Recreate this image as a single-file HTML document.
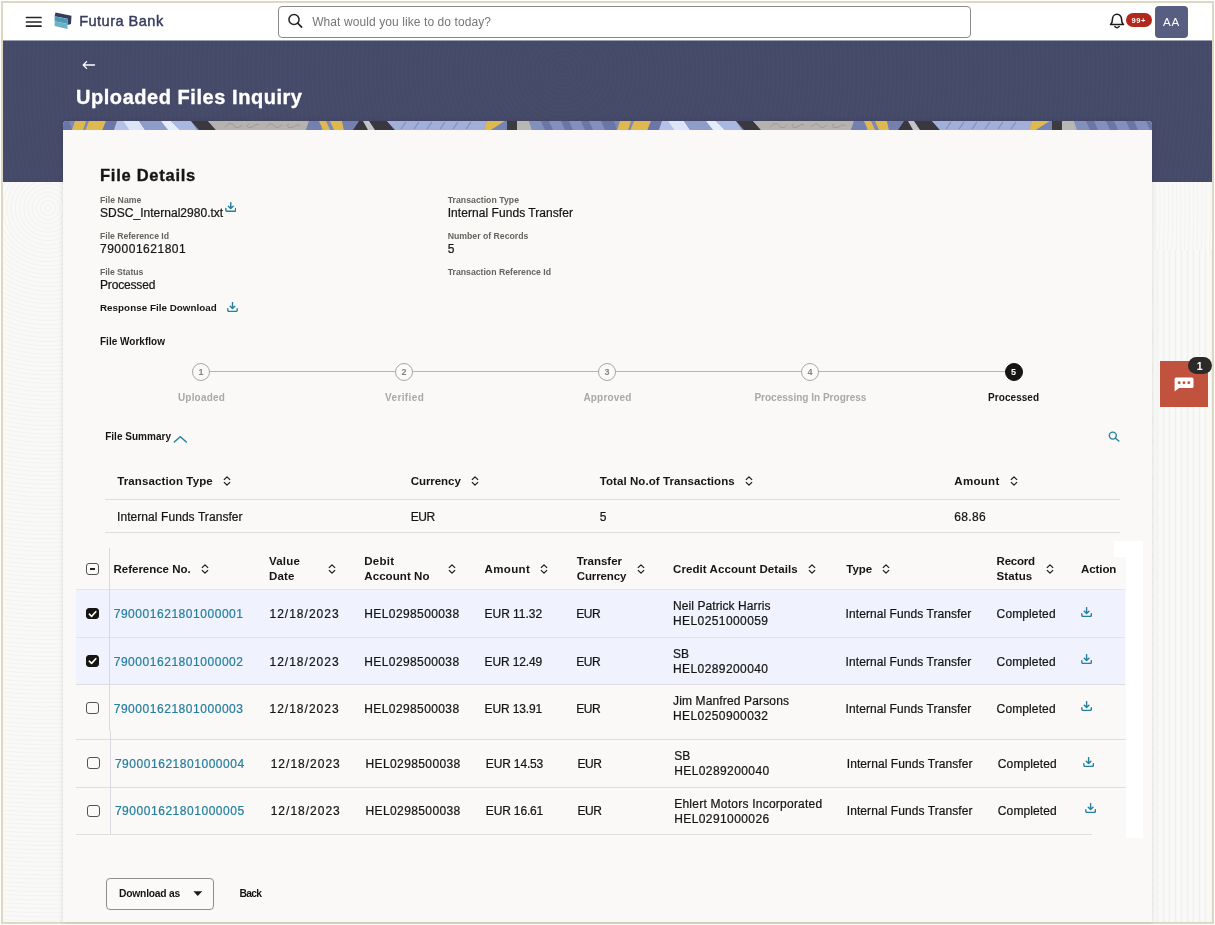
<!DOCTYPE html>
<html lang="en"><head><meta charset="utf-8"><title>Uploaded Files Inquiry</title>
<style>
*{box-sizing:border-box;margin:0;padding:0}
html,body{width:1215px;height:925px;overflow:hidden;background:#fff}
body{font-family:"Liberation Sans",sans-serif;color:#161513;position:relative;will-change:transform}
.abs,.t,svg.i{position:absolute}
.t{white-space:nowrap;line-height:1;display:block}
#frame{left:1px;top:1px;width:1213px;height:923px;border:2px solid #ddd8c1;background:#f8f7f5 repeating-radial-gradient(circle at 45px 205px,#f9f9f7 0,#f9f9f7 2.2px,#f3f2f0 3.2px,#f9f9f7 4.2px)}
#hdr{left:3px;top:3px;width:1209px;height:37px;background:#fff}
#band{left:3px;top:40px;width:1209px;height:142px;background:#464a69 repeating-radial-gradient(circle at 560px 30px,#464a69 0,#464a69 2.5px,#494d6c 3.5px,#464a69 4.5px);border-top:1px solid #9b9db1}
#card{left:63px;top:121px;width:1089px;height:801px;background:#faf9f7;border-radius:4px 4px 0 0;box-shadow:0 0 5px rgba(0,0,0,.13);overflow:hidden}
#strip{left:0;top:0;width:1089px;height:9px}
#search{left:278px;top:6px;width:693px;height:32px;border:1px solid #8b8a88;border-radius:4px;background:#fff}
#avatar{left:1155px;top:6px;width:33px;height:32px;border-radius:4px;background:#575e81}
#nbadge{left:1126px;top:13.2px;width:25.5px;height:14px;border-radius:7px;background:#b2281b}
.hl{height:1px;background:#e0dedb}
.vl{width:1px;background:#d8d9de}
.sel{background:#f0f3fd}
.cb{width:12.8px;height:12.2px;border:1.6px solid #55534f;border-radius:3px;background:#fbfaf9}
.cb.on{background:#161513;border-color:#161513;width:12.5px;height:11.7px}
.step{width:18px;height:18px;border-radius:50%;border:1.5px solid #a9a8a5;background:#fbfaf9}
.step.on{background:#161513;border-color:#161513}
#btn{left:106px;top:877.5px;width:108px;height:32px;border:1px solid #8f8e8b;border-radius:4px;background:#fbfaf9}
#chat{left:1160px;top:361px;width:48px;height:46px;background:#c1523e}
#cbadge{left:1187.8px;top:357px;width:24.4px;height:17px;border-radius:9px;background:#2b2a28}
.white{background:#fff}
.fb{-webkit-text-stroke:.45px #363d5c}
.r{-webkit-text-stroke:.22px currentColor}
.hv{-webkit-text-stroke:.35px currentColor}
#rpanel{left:1153px;top:250px;width:59px;height:672px;background:repeating-linear-gradient(90deg,#f9f9f7 0,#f9f9f7 3px,#f2f1ef 4.5px,#f9f9f7 6px)}

</style></head>
<body>
<svg width="0" height="0" style="position:absolute">
<defs>
<symbol id="dl" viewBox="0 0 12 11"><path d="M6 .7V7M3.5 4.6 6 7.1 8.500 4.600M.9 7.200V9Q.9 10.200 2.100 10.200H9.900Q11.100 10.200 11.100 9V7.200" fill="none" stroke="#267f9f" stroke-width="1.5" stroke-linecap="round" stroke-linejoin="round"/></symbol>
<symbol id="sort" viewBox="0 0 8 10"><path d="M.9 3.900 4 .9 7.100 3.900M.9 6.100 4 9.100 7.100 6.100" fill="none" stroke="#1f1e1c" stroke-width="1.300" stroke-linecap="butt" stroke-linejoin="round"/></symbol>
</defs>
</svg>
<div class="abs" id="frame"></div>
<div class="abs" id="hdr"></div>
<div class="abs" id="band"></div>
<div class="abs" id="rpanel"></div>
<!-- header icons -->
<svg class="i" style="left:25px;top:15px" width="18" height="14" viewBox="0 0 18 14"><path d="M1.500 2.500H16M1.500 7H16M1.500 11.200H16" stroke="#262523" stroke-width="1.700" stroke-linecap="round"/></svg>
<svg class="i" style="left:54px;top:11.500px" width="19" height="18" viewBox="0 0 19 18"><path d="M1.500.6 17.500 3.800 17 12 13.500 13 13.500 6.800 0.600 4.200Z" fill="#353c5e"/><path d="M.6 4.300 13.500 7 13.500 12 .6 9.200Z" fill="#4a9ab6"/><path d="M.6 9.200 13.500 12 13.500 17 .6 14Z" fill="#6eb1c6"/></svg>
<div class="abs" id="search"></div>
<svg class="i" style="left:287px;top:13px" width="17" height="16" viewBox="0 0 17 16"><circle cx="7" cy="6.500" r="5.050" fill="none" stroke="#262523" stroke-width="1.500"/><path d="M10.700 10.200 14.600 14.100" stroke="#262523" stroke-width="1.700" stroke-linecap="round"/></svg>
<svg class="i" style="left:1109px;top:13px" width="16" height="17" viewBox="0 0 16 17"><path d="M1.500 11.500H14.500C13 10.300 12.600 9 12.600 6.400 12.600 3.400 10.600 1.300 8 1.300 5.400 1.300 3.400 3.400 3.400 6.400 3.400 9 3 10.300 1.500 11.500Z" fill="none" stroke="#1d1c1a" stroke-width="1.550" stroke-linejoin="round"/><path d="M5.800 13.600Q8 15.800 10.200 13.600" fill="none" stroke="#1d1c1a" stroke-width="1.400" stroke-linecap="round"/></svg>
<div class="abs" id="nbadge"></div>
<div class="abs" id="avatar"></div>
<!-- back arrow -->
<svg class="i" style="left:82px;top:60px" width="14" height="10" viewBox="0 0 14 10"><path d="M1.200 5H12.500M4.600 1.600 1.200 5 4.600 8.400" fill="none" stroke="#fff" stroke-width="1.300" stroke-linecap="round" stroke-linejoin="round"/></svg>
<!-- card -->
<div class="abs" id="card">
<svg class="abs" id="strip" viewBox="0 0 1089 10" preserveAspectRatio="none">
<defs>
<pattern id="pat" x="0" y="0" width="545" height="10" patternUnits="userSpaceOnUse">
<rect width="545" height="10" fill="#7d8ab7"/>
<path d="M12 0H23L20 10H9Z" fill="#dfb94f"/>
<path d="M26 0H43L39.500 10H22.500Z" fill="#dfb94f"/>
<path d="M43 0H54L51 10H39.500Z" fill="#6b78a7"/>
<path d="M54 0H60L66 10H51Z" fill="#b3c2e6"/>
<path d="M60 0H76L82 10H66Z" fill="#dce5f7"/>
<path d="M76 0H98L105 10H82Z" fill="#8e9cc9"/>
<path d="M98 0H108L117 10H105Z" fill="#e4ebf9"/>
<path d="M108 0H128L134 10H117Z" fill="#a9b8df"/>
<path d="M128 0H145L153 10H136Z" fill="#39393f"/>
<path d="M145 0H246L243 10H153Z" fill="#b6b3af"/>
<path d="M162 7C165 2 170 2 171 5S176 9 179 4M186 3C183 5 184 8 188 7S192 3 196 4M203 7C206 3 209 2 211 5S215 8 219 4M226 3C223 5 225 8 229 7S233 3 237 5" fill="none" stroke="#959390" stroke-width=".9"/>
<path d="M246 0H258L258 10H243Z" fill="#7380b0"/>
<path d="M256 0H263L267 10H260Z" fill="#dfb94f"/>
<path d="M267 0H279L281 10H271Z" fill="#dfb94f"/>
<path d="M279 0H296L290 10H281Z" fill="#7380b0"/>
<path d="M296 0H324L332 10H290Z" fill="#38383e"/>
<path d="M300 0H306L312 10H305Z" fill="#c4c5c9"/>
<path d="M324 0H424L421 10H332Z" fill="#a1afd9"/>
<path d="M343 1 338 9M356 1 351 9M369 1 364 9M382 1 377 9M395 1 390 9M408 1 403 9" stroke="#8492c2" stroke-width="1.200"/>
<path d="M424 0H442L428 10H421Z" fill="#dfb94f"/>
<path d="M442 0H444V10H428Z" fill="#7683b3"/>
<path d="M444 0H454V10H444Z" fill="#3b3b41"/>
<path d="M454 0H466L469 10H454Z" fill="#b9b7b3"/>
<path d="M466 0H545V10H469Z" fill="#8390bd"/>
<path d="M478 0H486L490 10H482ZM498 0H506L510 10H502ZM518 0H526L530 10H522ZM538 0H545V10H542Z" fill="#6a77a6"/>
<path d="M0 0H6L9 10H0Z" fill="#6a77a6"/>
</pattern>
</defs>
<rect width="1089" height="10" fill="url(#pat)"/>
</svg>
</div>
<!-- file details icons -->
<svg class="i" style="left:224.500px;top:201.800px" width="11.500" height="10" viewBox="0 0 12 11" preserveAspectRatio="none"><use href="#dl"/></svg>
<svg class="i" style="left:226.500px;top:302px" width="11" height="10.200" viewBox="0 0 12 11" preserveAspectRatio="none"><use href="#dl"/></svg>
<!-- workflow -->
<div class="abs" style="left:201px;top:371px;width:812px;height:1.200px;background:#b4b3b1"></div>
<div class="abs step" style="left:192px;top:363px"></div>
<div class="abs step" style="left:395px;top:363px"></div>
<div class="abs step" style="left:598px;top:363px"></div>
<div class="abs step" style="left:801px;top:363px"></div>
<div class="abs step on" style="left:1004.500px;top:363px"></div>
<!-- file summary chevron + search -->
<svg class="i" style="left:173.300px;top:434.800px" width="15" height="9" viewBox="0 0 15 9"><path d="M1.300 7 7.300 1.700 13.300 7" fill="none" stroke="#267f9f" stroke-width="1.500" stroke-linecap="round" stroke-linejoin="round"/></svg>
<svg class="i" style="left:1108px;top:430.500px" width="12" height="11" viewBox="0 0 12 11"><circle cx="4.800" cy="4.600" r="3.500" fill="none" stroke="#267f9f" stroke-width="1.400"/><path d="M7.500 7.200 10.800 10" stroke="#267f9f" stroke-width="1.500" stroke-linecap="round"/></svg>
<!-- summary table -->
<div class="abs hl" style="left:105px;top:499px;width:1015px"></div>
<div class="abs hl" style="left:105px;top:532px;width:1015px"></div>
<svg class="i" style="left:222.500px;top:476px" width="8" height="10"><use href="#sort"/></svg>
<svg class="i" style="left:471px;top:476px" width="8" height="10"><use href="#sort"/></svg>
<svg class="i" style="left:745px;top:476px" width="8" height="10"><use href="#sort"/></svg>
<svg class="i" style="left:1009.500px;top:476px" width="8" height="10"><use href="#sort"/></svg>
<!-- main table backgrounds -->
<div class="abs sel" style="left:76px;top:589.300px;width:1049px;height:95px"></div>
<div class="abs" style="left:76px;top:637px;width:1049px;height:1px;background:#dfe3f1"></div>
<div class="abs hl" style="left:76px;top:589px;width:1049px;background:#e4e4ea"></div>
<div class="abs hl" style="left:76px;top:684px;width:1049px;background:#dcdce1"></div>
<div class="abs hl" style="left:76px;top:738.500px;width:1050px"></div>
<div class="abs hl" style="left:76px;top:786.800px;width:1050px"></div>
<div class="abs hl" style="left:76px;top:834px;width:1016px"></div>
<div class="abs vl" style="left:109px;top:548px;height:183px"></div>
<div class="abs vl" style="left:110px;top:731px;height:103px"></div>
<!-- white artefacts -->
<div class="abs white" style="left:1114px;top:541px;width:29px;height:15.500px"></div>
<div class="abs white" style="left:1126px;top:541px;width:17px;height:297px"></div>
<!-- sort icons main -->
<svg class="i" style="left:200.500px;top:564.200px" width="8" height="10"><use href="#sort"/></svg>
<svg class="i" style="left:327.500px;top:564.200px" width="8" height="10"><use href="#sort"/></svg>
<svg class="i" style="left:448px;top:564.200px" width="8" height="10"><use href="#sort"/></svg>
<svg class="i" style="left:540px;top:564.200px" width="8" height="10"><use href="#sort"/></svg>
<svg class="i" style="left:636.500px;top:564.200px" width="8" height="10"><use href="#sort"/></svg>
<svg class="i" style="left:808px;top:564.200px" width="8" height="10"><use href="#sort"/></svg>
<svg class="i" style="left:882px;top:564.200px" width="8" height="10"><use href="#sort"/></svg>
<svg class="i" style="left:1045.500px;top:564.200px" width="8" height="10"><use href="#sort"/></svg>
<!-- checkboxes -->
<div class="abs cb" style="left:86px;top:563px"></div>
<div class="abs" style="left:89.700px;top:568.400px;width:5.500px;height:1.300px;background:#262523"></div>
<div class="abs cb on" style="left:86.200px;top:607.700px"></div>
<svg class="i" style="left:86px;top:607.600px" width="13" height="12" viewBox="0 0 13 12"><path d="M3.300 6.200 5.600 8.400 9.800 3.700" fill="none" stroke="#fff" stroke-width="1.600" stroke-linecap="round" stroke-linejoin="round"/></svg>
<div class="abs cb on" style="left:86.200px;top:655.200px"></div>
<svg class="i" style="left:86px;top:655.400px" width="13" height="12" viewBox="0 0 13 12"><path d="M3.300 6.200 5.600 8.400 9.800 3.700" fill="none" stroke="#fff" stroke-width="1.600" stroke-linecap="round" stroke-linejoin="round"/></svg>
<div class="abs cb" style="left:86px;top:702.100px"></div>
<div class="abs cb" style="left:87.400px;top:757px"></div>
<div class="abs cb" style="left:87.400px;top:804.900px"></div>
<!-- row download icons -->
<svg class="i" style="left:1081px;top:606.600px" width="11.200" height="10.200" viewBox="0 0 12 11" preserveAspectRatio="none"><use href="#dl"/></svg>
<svg class="i" style="left:1081px;top:654.200px" width="11.200" height="10.200" viewBox="0 0 12 11" preserveAspectRatio="none"><use href="#dl"/></svg>
<svg class="i" style="left:1081px;top:701.400px" width="11.200" height="10.200" viewBox="0 0 12 11" preserveAspectRatio="none"><use href="#dl"/></svg>
<svg class="i" style="left:1082.500px;top:757.200px" width="11.200" height="10.200" viewBox="0 0 12 11" preserveAspectRatio="none"><use href="#dl"/></svg>
<svg class="i" style="left:1084.600px;top:803px" width="11.200" height="10.200" viewBox="0 0 12 11" preserveAspectRatio="none"><use href="#dl"/></svg>
<!-- buttons -->
<div class="abs" id="btn"></div>
<svg class="i" style="left:192.500px;top:891px" width="9.500" height="5.500" viewBox="0 0 9.500 5.500"><path d="M.4.300H9.100L4.750 5Z" fill="#1d1c1a"/></svg>
<!-- chat -->
<div class="abs" id="chat"></div>
<svg class="i" style="left:1174px;top:376.500px" width="20" height="15" viewBox="0 0 20 15"><path d="M2 .5H18Q19.500.5 19.500 2V9.500Q19.500 11 18 11H5L.6 14.500V2Q.6.500 2 .5Z" fill="#fff"/><circle cx="5.200" cy="5.700" r="1.450" fill="#c1523e"/><circle cx="10" cy="5.700" r="1.450" fill="#c1523e"/><circle cx="14.800" cy="5.700" r="1.450" fill="#c1523e"/></svg>
<div class="abs" id="cbadge"></div>

<div id="texts">
<span class="t fb" style="left:79.2px;top:14.0px;font-size:14.6px;color:#363d5c;letter-spacing:0.450px;">Futura Bank</span>
<span class="t ph" style="left:312.2px;top:16.0px;font-size:12px;color:#777572;letter-spacing:0.087px;">What would you like to do today?</span>
<span class="t" style="left:1131.5px;top:17.0px;font-size:7.5px;color:#fff;font-weight:700;letter-spacing:0.633px;">99+</span>
<span class="t" style="left:1163.0px;top:16.0px;font-size:11.6px;color:#fff;letter-spacing:0.831px;">AA</span>
<span class="t hv" style="left:76.0px;top:87.0px;font-size:20px;color:#fff;font-weight:700;letter-spacing:0.548px;">Uploaded Files Inquiry</span>
<span class="t hv" style="left:100.0px;top:167.0px;font-size:16.5px;color:#161513;font-weight:700;letter-spacing:0.734px;">File Details</span>
<span class="t" style="left:100.0px;top:196.0px;font-size:8.7px;color:#66635f;font-weight:700;letter-spacing:0.044px;">File Name</span>
<span class="t r" style="left:100.0px;top:207.0px;font-size:12px;color:#161513;letter-spacing:0.023px;">SDSC_Internal2980.txt</span>
<span class="t" style="left:100.0px;top:232.0px;font-size:8.7px;color:#66635f;font-weight:700;letter-spacing:-0.033px;">File Reference Id</span>
<span class="t r" style="left:100.0px;top:243.0px;font-size:12px;color:#161513;letter-spacing:0.510px;">790001621801</span>
<span class="t" style="left:100.0px;top:268.0px;font-size:8.7px;color:#66635f;font-weight:700;letter-spacing:-0.064px;">File Status</span>
<span class="t r" style="left:100.0px;top:279.0px;font-size:12px;color:#161513;letter-spacing:-0.163px;">Processed</span>
<span class="t" style="left:100.0px;top:303.0px;font-size:9.8px;color:#161513;font-weight:700;letter-spacing:0.040px;">Response File Download</span>
<span class="t" style="left:447.7px;top:196.0px;font-size:8.7px;color:#66635f;font-weight:700;letter-spacing:0.032px;">Transaction Type</span>
<span class="t r" style="left:447.7px;top:207.0px;font-size:12px;color:#161513;letter-spacing:0.056px;">Internal Funds Transfer</span>
<span class="t" style="left:447.7px;top:232.0px;font-size:8.7px;color:#66635f;font-weight:700;letter-spacing:0.005px;">Number of Records</span>
<span class="t r" style="left:447.7px;top:243.0px;font-size:12px;color:#161513;letter-spacing:0.112px;">5</span>
<span class="t" style="left:447.7px;top:268.0px;font-size:8.7px;color:#66635f;font-weight:700;letter-spacing:0.003px;">Transaction Reference Id</span>
<span class="t" style="left:100.0px;top:337.0px;font-size:10px;color:#161513;font-weight:700;letter-spacing:0.014px;">File Workflow</span>
<span class="t" style="left:177.9px;top:393.0px;font-size:10px;color:#a9a8a5;font-weight:700;letter-spacing:0.205px;">Uploaded</span>
<span class="t" style="left:384.9px;top:393.0px;font-size:10px;color:#a9a8a5;font-weight:700;letter-spacing:0.408px;">Verified</span>
<span class="t" style="left:583.4px;top:393.0px;font-size:10px;color:#a9a8a5;font-weight:700;letter-spacing:0.190px;">Approved</span>
<span class="t" style="left:754.4px;top:393.0px;font-size:10px;color:#a9a8a5;font-weight:700;letter-spacing:0.013px;">Processing In Progress</span>
<span class="t" style="left:988.1px;top:393.0px;font-size:10px;color:#161513;font-weight:700;letter-spacing:0.051px;">Processed</span>
<span class="t" style="left:105.2px;top:432.0px;font-size:10px;color:#161513;font-weight:700;letter-spacing:0.019px;">File Summary</span>
<span class="t" style="left:117.2px;top:476.0px;font-size:11.5px;color:#161513;font-weight:700;letter-spacing:0.118px;">Transaction Type</span>
<span class="t" style="left:410.7px;top:476.0px;font-size:11.5px;color:#161513;font-weight:700;letter-spacing:-0.057px;">Currency</span>
<span class="t" style="left:599.7px;top:476.0px;font-size:11.5px;color:#161513;font-weight:700;letter-spacing:0.073px;">Total No.of Transactions</span>
<span class="t" style="left:954.3px;top:476.0px;font-size:11.5px;color:#161513;font-weight:700;letter-spacing:0.312px;">Amount</span>
<span class="t r" style="left:117.0px;top:511.0px;font-size:12px;color:#161513;letter-spacing:0.070px;">Internal Funds Transfer</span>
<span class="t r" style="left:410.7px;top:511.0px;font-size:12px;color:#161513;letter-spacing:-0.372px;">EUR</span>
<span class="t r" style="left:599.7px;top:511.0px;font-size:12px;color:#161513;letter-spacing:0.112px;">5</span>
<span class="t r" style="left:954.3px;top:511.0px;font-size:12px;color:#161513;letter-spacing:0.342px;">68.86</span>
<span class="t" style="left:113.5px;top:564.0px;font-size:11.5px;color:#161513;font-weight:700;letter-spacing:-0.012px;">Reference No.</span>
<span class="t" style="left:269.0px;top:556.0px;font-size:11.5px;color:#161513;font-weight:700;letter-spacing:0.209px;">Value</span>
<span class="t" style="left:269.0px;top:571.0px;font-size:11.5px;color:#161513;font-weight:700;letter-spacing:0.188px;">Date</span>
<span class="t" style="left:364.3px;top:556.0px;font-size:11.5px;color:#161513;font-weight:700;letter-spacing:0.237px;">Debit</span>
<span class="t" style="left:364.3px;top:571.0px;font-size:11.5px;color:#161513;font-weight:700;letter-spacing:0.074px;">Account No</span>
<span class="t" style="left:484.6px;top:564.0px;font-size:11.5px;color:#161513;font-weight:700;letter-spacing:0.353px;">Amount</span>
<span class="t" style="left:576.7px;top:556.0px;font-size:11.5px;color:#161513;font-weight:700;letter-spacing:0.001px;">Transfer</span>
<span class="t" style="left:576.7px;top:571.0px;font-size:11.5px;color:#161513;font-weight:700;letter-spacing:-0.100px;">Currency</span>
<span class="t" style="left:673.0px;top:564.0px;font-size:11.5px;color:#161513;font-weight:700;letter-spacing:0.085px;">Credit Account Details</span>
<span class="t" style="left:846.3px;top:564.0px;font-size:11.5px;color:#161513;font-weight:700;letter-spacing:-0.033px;">Type</span>
<span class="t" style="left:996.6px;top:556.0px;font-size:11.5px;color:#161513;font-weight:700;letter-spacing:-0.245px;">Record</span>
<span class="t" style="left:996.6px;top:571.0px;font-size:11.5px;color:#161513;font-weight:700;letter-spacing:0.089px;">Status</span>
<span class="t" style="left:1080.9px;top:564.0px;font-size:11.5px;color:#161513;font-weight:700;letter-spacing:-0.056px;">Action</span>
<span class="t r" style="left:113.7px;top:608.0px;font-size:12px;color:#267f9f;letter-spacing:0.539px;">790001621801000001</span>
<span class="t r" style="left:269.5px;top:608.0px;font-size:12px;color:#161513;letter-spacing:1.004px;">12/18/2023</span>
<span class="t r" style="left:364.3px;top:608.0px;font-size:12px;color:#161513;letter-spacing:0.392px;">HEL0298500038</span>
<span class="t r" style="left:484.6px;top:608.0px;font-size:12px;color:#161513;letter-spacing:-0.039px;">EUR 11.32</span>
<span class="t r" style="left:576.2px;top:608.0px;font-size:12px;color:#161513;letter-spacing:-0.372px;">EUR</span>
<span class="t r" style="left:673.0px;top:600.0px;font-size:12px;color:#161513;letter-spacing:0.082px;">Neil Patrick Harris</span>
<span class="t r" style="left:673.0px;top:615.0px;font-size:12px;color:#161513;letter-spacing:0.409px;">HEL0251000059</span>
<span class="t r" style="left:845.6px;top:608.0px;font-size:12px;color:#161513;letter-spacing:0.070px;">Internal Funds Transfer</span>
<span class="t r" style="left:996.6px;top:608.0px;font-size:12px;color:#161513;letter-spacing:0.121px;">Completed</span>
<span class="t r" style="left:113.7px;top:656.0px;font-size:12px;color:#267f9f;letter-spacing:0.539px;">790001621801000002</span>
<span class="t r" style="left:269.5px;top:656.0px;font-size:12px;color:#161513;letter-spacing:1.004px;">12/18/2023</span>
<span class="t r" style="left:364.3px;top:656.0px;font-size:12px;color:#161513;letter-spacing:0.392px;">HEL0298500038</span>
<span class="t r" style="left:484.6px;top:656.0px;font-size:12px;color:#161513;letter-spacing:-0.150px;">EUR 12.49</span>
<span class="t r" style="left:576.2px;top:656.0px;font-size:12px;color:#161513;letter-spacing:-0.372px;">EUR</span>
<span class="t r" style="left:673.0px;top:648.0px;font-size:12px;color:#161513;letter-spacing:-0.016px;">SB</span>
<span class="t r" style="left:673.0px;top:663.0px;font-size:12px;color:#161513;letter-spacing:0.409px;">HEL0289200040</span>
<span class="t r" style="left:845.6px;top:656.0px;font-size:12px;color:#161513;letter-spacing:0.070px;">Internal Funds Transfer</span>
<span class="t r" style="left:996.6px;top:656.0px;font-size:12px;color:#161513;letter-spacing:0.121px;">Completed</span>
<span class="t r" style="left:113.7px;top:703.0px;font-size:12px;color:#267f9f;letter-spacing:0.539px;">790001621801000003</span>
<span class="t r" style="left:269.5px;top:703.0px;font-size:12px;color:#161513;letter-spacing:1.004px;">12/18/2023</span>
<span class="t r" style="left:364.3px;top:703.0px;font-size:12px;color:#161513;letter-spacing:0.392px;">HEL0298500038</span>
<span class="t r" style="left:484.6px;top:703.0px;font-size:12px;color:#161513;letter-spacing:-0.150px;">EUR 13.91</span>
<span class="t r" style="left:576.2px;top:703.0px;font-size:12px;color:#161513;letter-spacing:-0.372px;">EUR</span>
<span class="t r" style="left:673.0px;top:695.0px;font-size:12px;color:#161513;letter-spacing:0.146px;">Jim Manfred Parsons</span>
<span class="t r" style="left:673.0px;top:710.0px;font-size:12px;color:#161513;letter-spacing:0.409px;">HEL0250900032</span>
<span class="t r" style="left:845.6px;top:703.0px;font-size:12px;color:#161513;letter-spacing:0.070px;">Internal Funds Transfer</span>
<span class="t r" style="left:996.6px;top:703.0px;font-size:12px;color:#161513;letter-spacing:0.121px;">Completed</span>
<span class="t r" style="left:114.9px;top:758.0px;font-size:12px;color:#267f9f;letter-spacing:0.539px;">790001621801000004</span>
<span class="t r" style="left:270.7px;top:758.0px;font-size:12px;color:#161513;letter-spacing:1.004px;">12/18/2023</span>
<span class="t r" style="left:365.5px;top:758.0px;font-size:12px;color:#161513;letter-spacing:0.392px;">HEL0298500038</span>
<span class="t r" style="left:485.8px;top:758.0px;font-size:12px;color:#161513;letter-spacing:-0.150px;">EUR 14.53</span>
<span class="t r" style="left:577.4px;top:758.0px;font-size:12px;color:#161513;letter-spacing:-0.372px;">EUR</span>
<span class="t r" style="left:674.2px;top:750.0px;font-size:12px;color:#161513;letter-spacing:-0.016px;">SB</span>
<span class="t r" style="left:674.2px;top:765.0px;font-size:12px;color:#161513;letter-spacing:0.409px;">HEL0289200040</span>
<span class="t r" style="left:846.8px;top:758.0px;font-size:12px;color:#161513;letter-spacing:0.070px;">Internal Funds Transfer</span>
<span class="t r" style="left:997.8px;top:758.0px;font-size:12px;color:#161513;letter-spacing:0.121px;">Completed</span>
<span class="t r" style="left:114.9px;top:805.0px;font-size:12px;color:#267f9f;letter-spacing:0.539px;">790001621801000005</span>
<span class="t r" style="left:270.7px;top:805.0px;font-size:12px;color:#161513;letter-spacing:1.004px;">12/18/2023</span>
<span class="t r" style="left:365.5px;top:805.0px;font-size:12px;color:#161513;letter-spacing:0.392px;">HEL0298500038</span>
<span class="t r" style="left:485.8px;top:805.0px;font-size:12px;color:#161513;letter-spacing:-0.150px;">EUR 16.61</span>
<span class="t r" style="left:577.4px;top:805.0px;font-size:12px;color:#161513;letter-spacing:-0.372px;">EUR</span>
<span class="t r" style="left:674.2px;top:798.0px;font-size:12px;color:#161513;letter-spacing:0.237px;">Ehlert Motors Incorporated</span>
<span class="t r" style="left:674.2px;top:813.0px;font-size:12px;color:#161513;letter-spacing:0.409px;">HEL0291000026</span>
<span class="t r" style="left:846.8px;top:805.0px;font-size:12px;color:#161513;letter-spacing:0.070px;">Internal Funds Transfer</span>
<span class="t r" style="left:997.8px;top:805.0px;font-size:12px;color:#161513;letter-spacing:0.121px;">Completed</span>
<span class="t" style="left:119.0px;top:889.0px;font-size:10.3px;color:#161513;font-weight:700;letter-spacing:-0.222px;">Download as</span>
<span class="t" style="left:239.5px;top:889.0px;font-size:10.3px;color:#161513;font-weight:700;letter-spacing:-0.742px;">Back</span>
<span class="t" style="left:198.5px;top:368.0px;font-size:9px;color:#84837f;font-weight:700;">1</span>
<span class="t" style="left:401.5px;top:368.0px;font-size:9px;color:#84837f;font-weight:700;">2</span>
<span class="t" style="left:604.5px;top:368.0px;font-size:9px;color:#84837f;font-weight:700;">3</span>
<span class="t" style="left:807.5px;top:368.0px;font-size:9px;color:#84837f;font-weight:700;">4</span>
<span class="t" style="left:1011.1px;top:368.0px;font-size:9px;color:#fff;font-weight:700;">5</span>
<span class="t" style="left:1196.8px;top:361.0px;font-size:10.5px;color:#fff;font-weight:700;">1</span>
</div>
</body></html>
